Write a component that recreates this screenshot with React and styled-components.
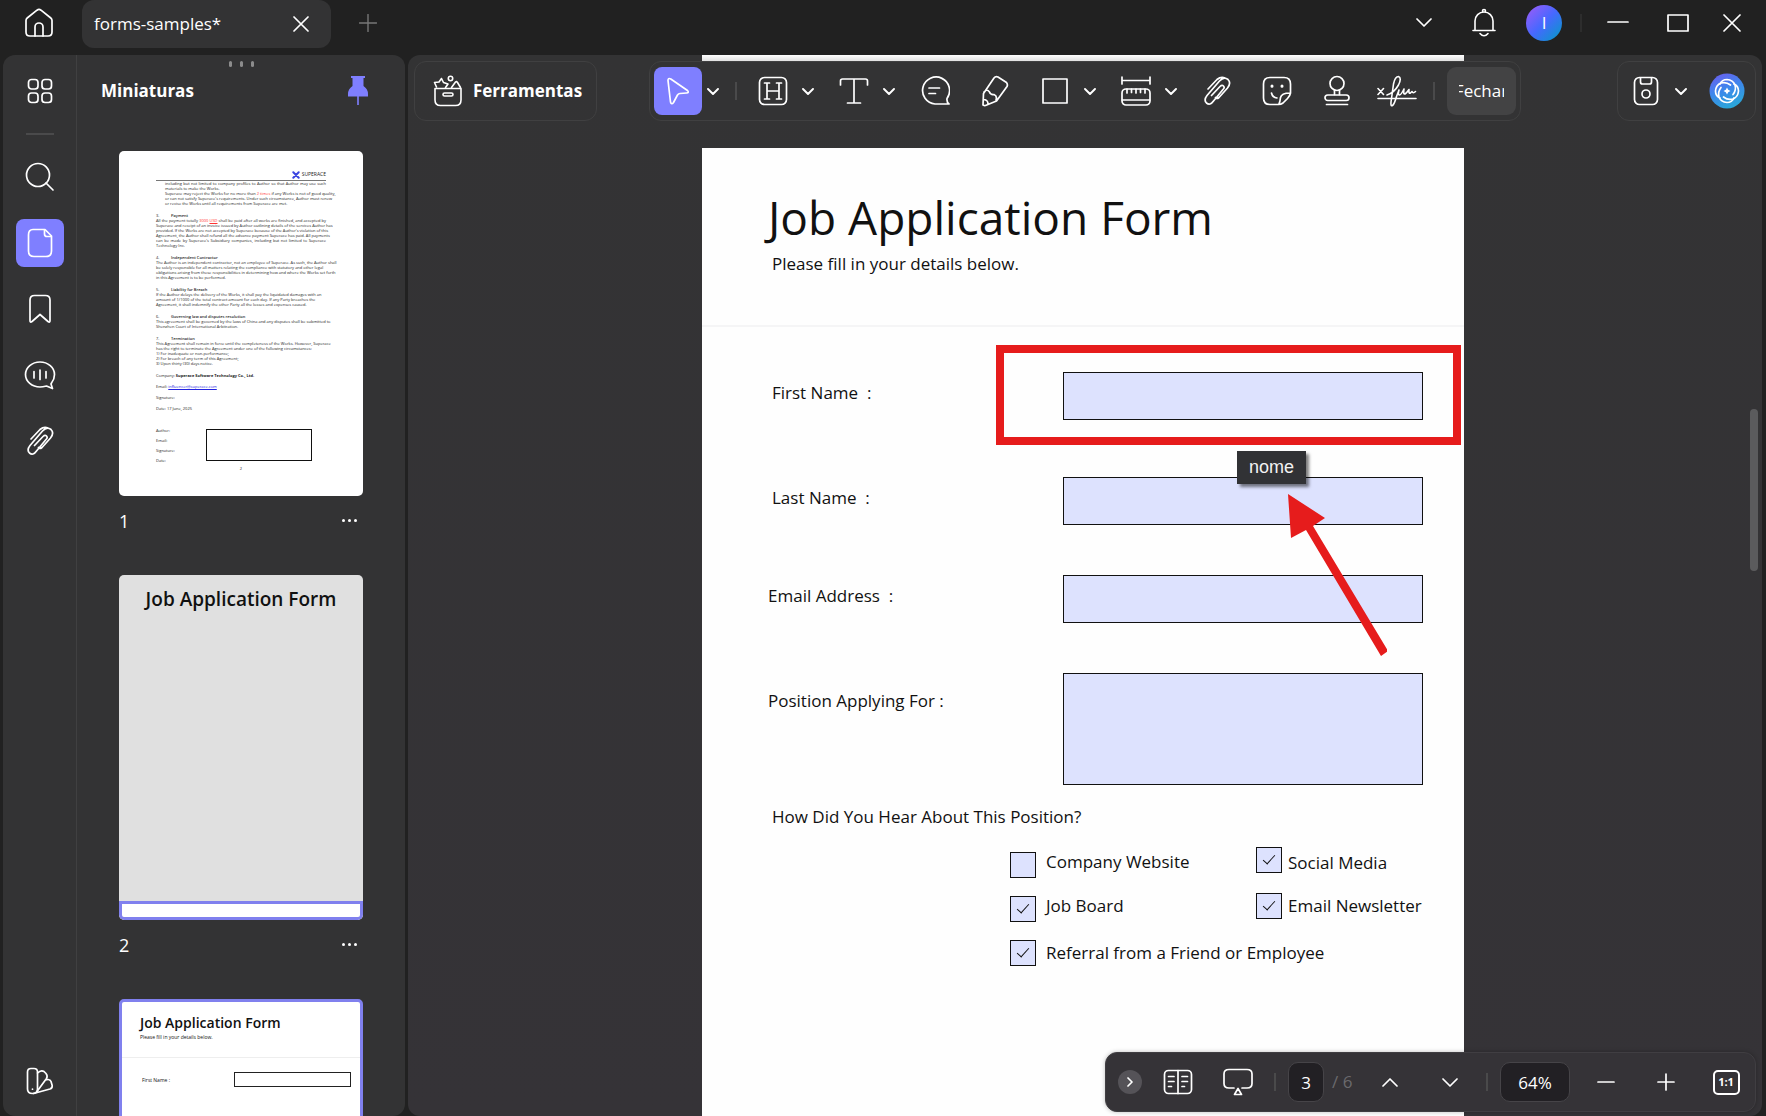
import React from "react";
import styled, { createGlobalStyle, css } from "styled-components";

const color = {
  chrome: "#212121",
  panel: "#333334",
  line: "#404041",
  accent: "#7f7fff",
  field: "#dde2fe",
  mark: "#e61c1c",
};

const GlobalStyle = createGlobalStyle`
  *, *::before, *::after { box-sizing: border-box; }
  html, body, #root { height: 100%; }
  body {
    margin: 0;
    background: ${color.chrome};
    color: #fff;
    font: 17px/24px "Open Sans", "Noto Sans", sans-serif;
    overflow: hidden;
  }
  button, input, textarea { font: inherit; color: inherit; }
  svg { display: block; flex: none; }
`;

/* ---------- icons ---------- */

const Glyph = ({ w = 30, h = 30, sw = 1.7, children }) => (
  <svg
    width={w}
    height={h}
    viewBox={`0 0 ${w} ${h}`}
    fill="none"
    stroke="#fff"
    strokeWidth={sw}
    strokeLinecap="round"
    strokeLinejoin="round"
    aria-hidden="true"
  >
    {children}
  </svg>
);

const HomeIcon = () => (
  <Glyph>
    <path d="M2 12.5 Q2 11 3.2 10 L13 2.2 Q15 .7 17 2.2 L26.800 10 Q28 11 28 12.500 V24 Q28 28 24 28 H6 Q2 28 2 24 Z" />
    <path d="M11 28 V19 A4 4 0 0 1 19 19 V28" />
  </Glyph>
);
const CloseIcon = ({ size = 16 }) => (
  <Glyph w={size} h={size}>
    <path d={`M1 1 L${size - 1} ${size - 1} M${size - 1} 1 L1 ${size - 1}`} />
  </Glyph>
);
const AddTabIcon = () => (
  <Glyph w={18} h={18} sw={1.4}>
    <path stroke="#777" d="M9 0.500 V17.500 M0.500 9 H17.500" />
  </Glyph>
);
const BellIcon = () => (
  <Glyph w={24} h={30} sw={1.6}>
    <path d="M3 22 V13 A9 9 0 0 1 21 13 V22 M1 22.500 H23 M8 25.500 Q12 30 16 25.500 M10.500 4 V3 A1.500 1.500 0 0 1 13.500 3 V4" />
  </Glyph>
);
const MinimizeIcon = () => (
  <Glyph w={22} h={18}>
    <path d="M1 8 H21" />
  </Glyph>
);
const MaximizeIcon = () => (
  <Glyph w={22} h={18}>
    <rect x="1" y="1" width="20" height="16" />
  </Glyph>
);
const ChevronIcon = ({ w = 16, h = 9, up, sw = 1.7 }) => (
  <Glyph w={w} h={h} sw={sw}>
    <path d={up ? `M1 ${h - 1} L${w / 2} 1 L${w - 1} ${h - 1}` : `M1 1 L${w / 2} ${h - 1} L${w - 1} 1`} />
  </Glyph>
);
const GridIcon = () => (
  <Glyph w={26} h={26}>
    <rect x="1.500" y="1.500" width="9.500" height="9.500" rx="3" />
    <rect x="15" y="1.500" width="9.500" height="9.500" rx="3" />
    <rect x="1.500" y="15" width="9.500" height="9.500" rx="3" />
    <rect x="15" y="15" width="9.500" height="9.500" rx="3" />
  </Glyph>
);
const SearchIcon = () => (
  <Glyph>
    <circle cx="13" cy="13" r="11.500" />
    <path d="M21 21 L28 28" />
  </Glyph>
);
const FileIcon = () => (
  <Glyph w={26} h={30}>
    <path d="M6 1.500 H18 L24.500 8 V23 Q24.500 28.500 19 28.500 H7 Q1.500 28.500 1.500 23 V7 Q1.500 1.500 6 1.500 Z" />
    <path d="M17.500 2 V6 Q17.500 8.500 20 8.500 H24" />
  </Glyph>
);
const BookmarkIcon = () => (
  <Glyph w={24} h={30}>
    <path d="M2 6 Q2 1.500 6.500 1.500 H17.500 Q22 1.500 22 6 V26.500 Q22 29 20 27.500 L12 20.500 L4 27.500 Q2 29 2 26.500 Z" />
  </Glyph>
);
const VoiceIcon = () => (
  <Glyph w={32} h={30}>
    <path d="M27.500 23 C29.500 20.500 30.500 17.500 30.500 14.500 C30.500 7.500 24 2 16 2 C8 2 1.500 7.500 1.500 14.500 C1.500 21.500 8 27 16 27 C18.500 27 20.500 26.500 22.500 26 L28.500 28.500 L27 24 Z" />
    <path d="M10 11.500 V18 M16 10 V19.500 M22 11.500 V18" />
  </Glyph>
);
const ClipIcon = () => (
  <Glyph w={28} h={30}>
    <path d="M8.500 19.500 L17 10.500 Q19 8.500 20.500 10 Q22 11.500 20 13.500 L10.500 25 Q7 30 3.500 27 Q.5 24 4 19.500 L16.500 5 Q21 0 25 3.500 Q28.500 7 24.500 12 L16 21.500 Q13.500 23.500 12.500 21.500 M5 13 L14 3.500 Q18 0 22 2" />
  </Glyph>
);
const SwatchIcon = () => (
  <Glyph w={28} h={28}>
    <path d="M5 1.500 H8 Q11.500 1.500 11.500 5 V22 Q11.500 26.500 6.500 26.500 Q1.500 26.500 1.500 22 V5 Q1.500 1.500 5 1.500 Z" />
    <path d="M11.500 6 Q15 2.500 18 4.500 L20 6.500 Q22 9 20.500 11.500 L11 24.500 M19.500 13 Q24 11.500 25 14.500 L26.200 18.500 Q26.500 21 24 22 L7.500 26.500" />
    <path d="M6.500 22 V22.200" />
  </Glyph>
);
const PinIcon = () => (
  <svg width="20" height="30" viewBox="0 0 20 30" aria-hidden="true">
    <path fill={color.accent} d="M3 0 H17 V2 H15.500 V10 Q20 13 20 18 V20.500 H0 V18 Q0 13 4.500 10 V2 H3 Z" />
    <rect x="9.200" y="20" width="1.600" height="9" fill={color.accent} />
  </svg>
);
const ToolboxIcon = () => (
  <Glyph w={30} h={32} sw={1.600}>
    <path d="M2 13.500 H28 V25 Q28 30.500 22.500 30.500 H7.500 Q2 30.500 2 25 Z" />
    <rect x="10" y="18" width="10" height="3" rx="1.500" />
    <path d="M3.500 12 L1.500 7.500 L6 7 L8.500 3.500 L10.500 7.500 L15 9 L12.500 12.500 M18.500 12.500 L22.500 7 Q23.500 6 24.500 7.500 L27.500 12.500" />
    <circle cx="17.500" cy="3.500" r="2.200" />
  </Glyph>
);
const CursorIcon = () => (
  <Glyph w={24} h={30}>
    <path d="M2 4.500 Q2 1.500 4.800 3 L21.500 14.500 Q23.500 16.800 20.500 17 L14 17.500 Q12.500 17.600 11.500 19 L7.500 26.500 Q5.500 29.200 4.500 26 Z" />
  </Glyph>
);
const HighlightIcon = () => (
  <Glyph>
    <rect x="1.500" y="1.500" width="27" height="27" rx="5" />
    <path d="M9 7 V23 M21 7 V23 M6.500 7 H11.500 M18.500 7 H23.500 M6.500 23 H11.500 M18.500 23 H23.500 M9 15 H21" />
  </Glyph>
);
const TextIcon = () => (
  <Glyph w={30} h={28}>
    <path d="M1.500 8 V4 Q1.500 2 3.500 2 H26.500 Q28.500 2 28.500 4 V8 M15 2 V26 M8.500 26 H21.500" />
  </Glyph>
);
const CommentIcon = () => (
  <Glyph>
    <path d="M15 28 H29 Q26.500 26 27 22.500 A13.500 13.500 0 1 0 15 28 Z M9 12 H19.500 M9 17.500 H15.500" />
  </Glyph>
);
const PencilIcon = () => (
  <Glyph w={28} h={32}>
    <path d="M2 30 L2.500 18.500 L13 3 Q14.500 1 17 2 L25.500 7.500 Q27 9.500 26 11.500 L15.500 26 L4.500 30.500 Q2 31 2 29 Z M3 17 Q6 13.500 8.500 17 Q9.500 20 13 19.500 Q16.500 21 15 25 M3 24.500 Q7 25 7 29" />
  </Glyph>
);
const SquareIcon = () => (
  <Glyph w={26} h={26}>
    <rect x="1" y="1" width="24" height="24" />
  </Glyph>
);
const MeasureIcon = () => (
  <Glyph>
    <path d="M1 1 V8 M29 1 V8 M1 4.500 H29 M1.500 24 H28.500" />
    <rect x="1" y="13" width="28" height="16" rx="4" />
    <path d="M6 13 V17 M10.500 13 V16.500 M15 13 V17 M19.500 13 V16.500 M24 13 V17" />
  </Glyph>
);
const StickerIcon = () => (
  <Glyph>
    <path d="M8 1.500 H22 Q28.500 1.500 28.500 8 V17 Q28 20 25.500 22.500 L21 27 Q19 28.500 16.500 28.500 H8 Q1.500 28.500 1.500 22 V8 Q1.500 1.500 8 1.500 Z M28 17 Q19.500 17 18.500 21.500 Q18 26 17 28 M9.500 17 Q10.500 21.500 15 22" />
    <path strokeWidth="3" d="M10 10 V10.200 M20 10 V10.200" />
  </Glyph>
);
const StampIcon = () => (
  <Glyph w={26} h={32}>
    <ellipse cx="13" cy="8.500" rx="7" ry="7" />
    <path d="M10.500 15.500 V19.500 M15.500 15.500 V19.500 M2.500 29.500 H23.500" />
    <rect x="1" y="20" width="24" height="5.500" rx="2.700" />
  </Glyph>
);
const SignIcon = () => (
  <Glyph w={40} h={32} sw={1.600}>
    <path d="M1 13.500 L6.500 19.500 M6.500 13.500 L1 19.500 M1 23.500 H39" />
    <path d="M10 20 Q17 18 21.500 10 Q25 2.500 21.500 1.500 Q18 1.500 16.500 9 L14 27 Q13.500 31.500 15.500 30.500 Q17.500 29 19.500 21.500 L22 15 Q20.500 20 22.500 20 Q24 20 27 14 Q26 19.500 28 19 Q30 17.500 32 14.500 Q31.500 19 33.500 18 L35 16.500 Q36 19 38.500 16.500" />
  </Glyph>
);
const SaveIcon = () => (
  <Glyph w={26} h={30}>
    <rect x="1.500" y="1.500" width="23" height="27" rx="5" />
    <path d="M7.500 2 V6 Q7.500 8 9.500 8 H16.500 Q18.500 8 18.500 6 V2" />
    <circle cx="13" cy="18" r="4" />
  </Glyph>
);
const AssistantIcon = () => (
  <svg width="36" height="36" viewBox="0 0 36 36" aria-hidden="true">
    <defs>
      <linearGradient id="assistant" x1="0.200" y1="0" x2="0.600" y2="1">
        <stop offset="0" stopColor="#6a5ff0" />
        <stop offset="0.450" stopColor="#3f86ec" />
        <stop offset="1" stopColor="#29a8d8" />
      </linearGradient>
    </defs>
    <circle cx="18" cy="18" r="17.500" fill="url(#assistant)" />
    <g fill="none" stroke="#fff" strokeWidth="1.700" strokeLinecap="round">
      {[0, 90, 180, 270].map((a) => (
        <path key={a} transform={`rotate(${a} 18 18)`} d="M11 11 Q13 6.500 18 6.500 Q24 7 26 12 Q27.500 17 24 21.500" />
      ))}
    </g>
    <path fill="#fff" d="M18 14.500 L19.200 16.800 L21.500 18 L19.200 19.200 L18 21.500 L16.800 19.200 L14.500 18 L16.800 16.800 Z" />
  </svg>
);
const BookIcon = () => (
  <Glyph w={30} h={26}>
    <rect x="1.500" y="1.500" width="27" height="23" rx="4" />
    <path d="M15 1.500 V24.500 M5.500 7.500 H11 M5.500 12.500 H11 M5.500 17.500 H8.500 M19 7.500 H24.500 M19 12.500 H24.500 M19 17.500 H21.500" />
  </Glyph>
);
const PresentIcon = () => (
  <Glyph w={30} h={28}>
    <path d="M11 20 H6 Q1 20 1 15.500 V6 Q1 1.500 6 1.500 H24 Q29 1.500 29 6 V15.500 Q29 20 24 20 H19 M15 20.500 L11.500 26.500 H18.500 Z" />
  </Glyph>
);
const SignLineIcon = ({ plus }) => (
  <Glyph w={18} h={18}>
    <path d={plus ? "M9 1 V17 M1 9 H17" : "M1 9 H17"} />
  </Glyph>
);
const ArrowMark = styled.svg`
  position: absolute;
  left: 224px;
  top: 121px;
  z-index: 2;
  pointer-events: none;
`;
const LogoMark = () => (
  <svg width="8" height="8" viewBox="0 0 8 8" aria-hidden="true">
    <path stroke="#3b45e0" strokeWidth="2" strokeLinecap="round" d="M1.300 1.300 L6.700 6.700 M6.700 1.300 L1.300 6.700" />
  </svg>
);

/* ---------- window frame ---------- */

const Window = styled.div`
  display: flex;
  flex-direction: column;
  height: 100vh;
  min-width: 1200px;
`;
const TitleBar = styled.header`
  display: flex;
  align-items: center;
  flex: none;
  height: 55px;
  padding: 0 16px 10px 24px;
  gap: 28px;
`;
const IconButton = styled.button`
  display: flex;
  align-items: center;
  justify-content: center;
  flex: none;
  width: ${(p) => p.$w || 48}px;
  height: 48px;
  padding: 0;
  border: 0;
  border-radius: 8px;
  background: ${(p) => (p.$active ? color.accent : "transparent")};
  cursor: pointer;
`;
const Tab = styled.div`
  display: flex;
  align-items: center;
  justify-content: space-between;
  width: 249px;
  height: 48px;
  margin: 3px 0 0 0;
  padding: 0 14px 0 12px;
  border-radius: 12px;
  background: ${color.panel};
`;
const WindowControls = styled.div`
  display: flex;
  align-items: center;
  margin-left: auto;
  gap: 12px;
`;
const Avatar = styled.button`
  width: 36px;
  height: 36px;
  margin: 0 6px;
  padding: 0;
  border: 0;
  border-radius: 50%;
  background: linear-gradient(135deg, #9a5cf8 5%, #4668ff 50%, #0798c8 95%);
  line-height: 36px;
`;
const Divider = styled.span`
  flex: none;
  width: ${(p) => (p.$across ? "28px" : "2px")};
  height: ${(p) => (p.$across ? "2px" : "18px")};
  background: ${(p) => (p.$faint ? "#2d2d2d" : "#4a4a4b")};
`;
const Workspace = styled.div`
  display: flex;
  flex: 1;
  min-height: 0;
  gap: 3px;
  padding: 0 4px 0 3px;
`;

/* ---------- side panel ---------- */

const SidePanel = styled.aside`
  display: flex;
  flex: none;
  width: 402px;
  border-radius: 12px;
  background: ${color.panel};
  overflow: hidden;
`;
const Rail = styled.nav`
  display: flex;
  flex-direction: column;
  align-items: center;
  gap: 18px;
  width: 74px;
  padding: 12px 0 11px;
  border-right: 1px solid ${color.line};
`;
const RailSpacer = styled.span`
  flex: 1;
`;
const Thumbnails = styled.section`
  display: flex;
  flex-direction: column;
  flex: 1;
  min-width: 0;
  padding: 6px 42px 0;
`;
const Grip = styled.div`
  display: flex;
  justify-content: center;
  gap: 8px;
  height: 6px;
  i {
    width: 3px;
    border-radius: 2px;
    background: #8c8c8c;
  }
`;
const PanelHeader = styled.div`
  display: flex;
  align-items: center;
  justify-content: space-between;
  margin: 0 -5px 0 -18px;
  height: 48px;
`;
const PanelTitle = styled.h2`
  margin: 0;
  font-size: 17px;
  font-weight: 700;
`;
const ThumbList = styled.ol`
  flex: 1;
  min-height: 0;
  margin: 36px 0 0;
  padding: 0;
  list-style: none;
  overflow: hidden;
`;
const ThumbItem = styled.li`
  display: flex;
  flex-direction: column;
`;
const Thumb = styled.div`
  display: flex;
  flex-direction: column;
  height: 345px;
  border-radius: 5px;
  background: ${(p) => (p.$dim ? "#e0e0e0" : "#fff")};
  border: ${(p) => (p.$selected ? `3px solid #8080ee` : "0")};
  color: #111;
  overflow: hidden;
`;
const ThumbFooter = styled.div`
  display: flex;
  align-items: center;
  justify-content: space-between;
  height: 49px;
  margin-bottom: 30px;
  font-size: 18px;
`;
const MoreButton = styled.button`
  display: flex;
  gap: 3px;
  padding: 6px;
  border: 0;
  background: none;
  i {
    width: 3px;
    height: 3px;
    border-radius: 50%;
    background: #fff;
  }
`;
const ContractPage = styled.div`
  display: flex;
  flex-direction: column;
  padding: 18px 37px 0;
  font-size: 4px;
  line-height: 5px;
  color: #222;
`;
const Letterhead = styled.div`
  display: flex;
  align-items: center;
  justify-content: flex-end;
  gap: 2px;
  height: 12px;
  border-bottom: 1px solid #777;
  font-size: 5px;
`;
const Clause = styled.div`
  margin-bottom: 7px;
  padding-left: ${(p) => (p.$indent ? 9 : 0)}px;
`;
const Line = styled.div`
  white-space: nowrap;
  ${(p) =>
    p.$full &&
    css`
      text-align: justify;
      text-align-last: justify;
    `}
  em {
    font-style: normal;
    color: #f33;
  }
`;
const ClauseTitle = styled.div`
  display: flex;
  font-weight: 600;
  span {
    width: 15px;
    font-weight: 400;
  }
`;
const Details = styled.div`
  display: flex;
  flex-direction: column;
  gap: ${(p) => p.$gap}px;
  a {
    color: #2323e0;
  }
`;
const SignBlock = styled.div`
  display: flex;
  gap: 31px;
  margin-top: 17px;
`;
const SignBox = styled.div`
  width: 106px;
  height: 32px;
  margin-top: 1px;
  border: 1px solid #111;
`;
const Folio = styled.div`
  text-align: center;
  margin-top: 3px;
`;
const CoverTitle = styled.div`
  flex: 1;
  padding-top: 10px;
  font-size: 19px;
  line-height: 28px;
  font-weight: 600;
  text-align: center;
  white-space: nowrap;
`;
const Viewport = styled.div`
  height: 19px;
  border: 3px solid #8080ee;
  border-radius: 0 0 5px 5px;
  background: #fff;
`;
const MiniHeader = styled.div`
  padding: 12px 18px 15px;
  border-bottom: 1px solid #eee;
  font-size: 5px;
  line-height: 10px;
  b {
    display: block;
    font-size: 14px;
    line-height: 18px;
    font-weight: 600;
  }
`;
const MiniRow = styled.div`
  display: flex;
  align-items: center;
  justify-content: space-between;
  height: 15px;
  margin: 14px 9px 18px 20px;
  font-size: 5px;
  i {
    width: 117px;
    height: 15px;
    border: 1px solid #222;
  }
`;

/* ---------- document area ---------- */

const Main = styled.main`
  position: relative;
  display: flex;
  flex-direction: column;
  flex: 1;
  min-width: 0;
  border-radius: 12px;
  background: linear-gradient(#333334, #353337);
  overflow: hidden;
`;
const PreviousPage = styled.div`
  flex: none;
  width: 762px;
  height: 6px;
  margin: 0 auto;
  background: linear-gradient(#fff, #e0e0e0);
`;
const Column = styled.div`
  display: flex;
  flex-direction: column;
  flex: ${(p) => (p.$grow ? "1" : "none")};
  min-height: 0;
  padding-right: 4px;
`;
const Toolbars = styled.div`
  display: grid;
  grid-template-columns: 1fr auto 1fr;
  flex: none;
  margin: 0 6px 27px;
`;
const Toolbar = styled.div`
  display: flex;
  align-items: center;
  gap: 12px;
  height: 60px;
  padding: 0 4px;
  border: 1px solid ${color.line};
  border-radius: 12px;
  background: ${color.panel};
  justify-self: ${(p) => p.$side || "center"};
`;
const ToolsButton = styled.button`
  display: flex;
  align-items: center;
  gap: 10px;
  height: 60px;
  padding: 0 14px 0 18px;
  border: 1px solid ${color.line};
  border-radius: 12px;
  background: transparent;
  font-weight: 700;
  justify-self: start;
`;
const Split = styled.div`
  display: flex;
`;
const FinishButton = styled.button`
  display: flex;
  justify-content: center;
  width: 69px;
  height: 48px;
  padding: 11px 12px;
  border: 0;
  border-radius: 9px;
  background: #434344;
  line-height: 26px;
  span {
    display: flex;
    justify-content: center;
    width: 45px;
    overflow: hidden;
  }
`;
const Page = styled.form`
  flex: 1;
  width: 762px;
  margin: 0 auto;
  background: #fefefe;
  color: #111;
`;
const PageHeader = styled.div`
  height: 179px;
  padding: 39px 66px 0;
  border-bottom: 2px solid #f5f5f6;
  margin-bottom: 45px;
`;
const Title = styled.h1`
  margin: 0;
  font-size: 46px;
  line-height: 60px;
  font-weight: 500;
  white-space: nowrap;
`;
const Subtitle = styled.p`
  margin: 5px 0 0 4px;
`;
const Row = styled.div`
  display: flex;
  align-items: flex-start;
  margin-bottom: ${(p) => p.$gap || 50}px;
`;
const Label = styled.label`
  width: 361px;
  padding-left: ${(p) => (p.$inset ? 70 : 66)}px;
  line-height: ${(p) => (p.$tall ? 56 : 42)}px;
`;
const Control = styled.div`
  position: relative;
  width: 360px;
`;
const fieldStyle = css`
  display: block;
  width: 100%;
  padding: 0 10px;
  border: 1px solid #111;
  border-radius: 0;
  background: ${color.field};
  outline: none;
  resize: none;
`;
const Field = styled.input`
  ${fieldStyle}
  height: 48px;
`;
const Area = styled.textarea`
  ${fieldStyle}
  height: 112px;
`;
const MarkFrame = styled.span`
  position: absolute;
  inset: -27px -38px -25px -67px;
  border: 8px solid ${color.mark};
  pointer-events: none;
`;
const Tooltip = styled.span`
  position: absolute;
  left: 174px;
  top: 79px;
  z-index: 1;
  padding: 4px 12px;
  background: #313235;
  box-shadow: 3px 3px 3px rgba(0, 0, 0, 0.5);
  color: #f2f2f2;
  font: 18px/25px "Liberation Sans", Arial, sans-serif;
`;
const Fieldset = styled.fieldset`
  margin: -30px 0 0;
  padding: 0;
  border: 0;
`;
const Legend = styled.legend`
  padding: 0 0 0 70px;
`;
const Options = styled.div`
  display: grid;
  grid-template-columns: 246px 1fr;
  margin: 18px 0 0 308px;
`;
const OptionColumn = styled.div`
  display: flex;
  flex-direction: column;
  gap: ${(p) => (p.$first ? 18 : 20)}px;
  padding-top: ${(p) => (p.$first ? 5 : 0)}px;
`;
const Option = styled.label`
  display: flex;
  align-items: ${(p) => p.$align || "center"};
  gap: ${(p) => (p.$wide ? 10 : 6)}px;
  line-height: 20px;
  white-space: nowrap;
`;
const Tick = styled.input`
  appearance: none;
  display: flex;
  justify-content: center;
  flex: none;
  width: 26px;
  height: 26px;
  margin: 0;
  border: 1px solid #111;
  background: ${color.field};
  &:checked::after {
    content: "";
    width: 6px;
    height: 12px;
    margin-top: 4px;
    border: solid #111;
    border-width: 0 1px 1px 0;
    transform: rotate(42deg);
  }
`;
const ScrollThumb = styled.div`
  position: absolute;
  top: 354px;
  right: 4px;
  width: 8px;
  height: 162px;
  border-radius: 4px;
  background: #5b5b5d;
`;
const ViewBar = styled.div`
  position: absolute;
  right: 6px;
  bottom: 4px;
  display: flex;
  align-items: center;
  gap: 12px;
  height: 60px;
  padding: 0 5px 0 12px;
  border: 1px solid #403e42;
  border-radius: 12px;
  background: #353337;
  box-shadow: 0 0 4px rgba(0, 0, 0, 0.25);
  z-index: 3;
`;
const Collapse = styled.button`
  display: flex;
  align-items: center;
  justify-content: center;
  width: 24px;
  height: 24px;
  padding: 0;
  border: 0;
  border-radius: 50%;
  background: #555358;
  svg {
    transform: rotate(-90deg);
  }
`;
const Pager = styled.label`
  display: flex;
  align-items: center;
  gap: 8px;
  width: 66px;
  color: #6b6a6d;
`;
const Box = styled.input`
  width: ${(p) => p.$w}px;
  height: 40px;
  padding: 0;
  border: 1px solid #464448;
  border-radius: 10px;
  background: #222024;
  color: #fff;
  text-align: center;
`;
const ActualSize = styled.span`
  width: 27px;
  height: 25px;
  border: 2px solid #fff;
  border-radius: 5px;
  font-size: 11px;
  line-height: 20px;
  font-weight: 700;
`;

/* ---------- composition ---------- */

const Tool = ({ label, icon, active, caret }) => (
  <Split>
    <IconButton aria-label={label} $active={active} type="button">
      {icon}
    </IconButton>
    {caret && (
      <IconButton aria-label={`${label}: opções`} $w={21} type="button">
        <ChevronIcon w={12} h={7} sw={1.9} />
      </IconButton>
    )}
  </Split>
);

const tools = [
  { label: "Destacar", icon: <HighlightIcon />, caret: true },
  { label: "Texto", icon: <TextIcon />, caret: true },
  { label: "Nota", icon: <CommentIcon /> },
  { label: "Lápis", icon: <PencilIcon /> },
  { label: "Forma", icon: <SquareIcon />, caret: true },
  { label: "Medir", icon: <MeasureIcon />, caret: true },
  { label: "Anexo", icon: <ClipIcon /> },
  { label: "Adesivo", icon: <StickerIcon /> },
  { label: "Carimbo", icon: <StampIcon /> },
  { label: "Assinatura", icon: <SignIcon /> },
];

const railItems = [
  { label: "Pesquisar", icon: <SearchIcon /> },
  { label: "Miniaturas", icon: <FileIcon />, active: true },
  { label: "Marcadores", icon: <BookmarkIcon /> },
  { label: "Comentários", icon: <VoiceIcon /> },
  { label: "Anexos", icon: <ClipIcon /> },
];

const clauses = [
  {
    no: "3.",
    title: "Payment",
    lines: [
      [<>All the payment totally <em>3000 <u>USD</u></em> shall be paid after all works are finished, and accepted by</>, 1],
      ["Superace and receipt of an invoice issued by Author outlining details of the services Author has", 1],
      ["provided. If the Works are not accepted by Superace because of the Author's violation of this", 1],
      ["Agreement, the Author shall refund all the advance payment Superace has paid. All payments", 1],
      ["can be made by Superace's Subsidiary companies, including but not limited to Superace", 1],
      ["Technology Inc."],
    ],
  },
  {
    no: "4.",
    title: "Independent Contractor",
    lines: [
      ["The Author is an independent contractor, not an employee of Superace. As such, the Author shall", 1],
      ["be solely responsible for all matters relating the compliance with statutory and other legal"],
      ["obligations arising from these responsibilities in determining how and where the Works set forth", 1],
      ["in this Agreement is to be performed."],
    ],
  },
  {
    no: "5.",
    title: "Liability for Breach",
    lines: [
      ["If the Author delays the delivery of the Works, it shall pay the liquidated damages with an"],
      ["amount of 1/1000 of the total contract amount for each day. If any Party breaches the"],
      ["Agreement, it shall indemnify the other Party all the losses and expenses caused."],
    ],
  },
  {
    no: "6.",
    title: "Governing law and disputes resolution",
    lines: [
      ["This agreement shall be governed by the laws of China and any disputes shall be submitted to"],
      ["Shenzhen Court of International Arbitration."],
    ],
  },
  {
    no: "7.",
    title: "Termination",
    lines: [
      ["This Agreement shall remain in force until the completeness of the Works. However, Superace", 1],
      ["has the right to terminate the Agreement under one of the following circumstances:"],
      ["1) For inadequate or non-performance;"],
      ["2) For breach of any term of this Agreement;"],
      ["3) Upon thirty (30) days notice."],
    ],
  },
];

const Footer = ({ n }) => (
  <ThumbFooter>
    <span>{n}</span>
    <MoreButton aria-label={`Mais opções da página ${n}`}>
      <i />
      <i />
      <i />
    </MoreButton>
  </ThumbFooter>
);

const ContractThumb = () => (
  <ContractPage>
    <Letterhead>
      <LogoMark />
      SUPERACE
    </Letterhead>
    <Clause $indent>
      <Line $full>including but not limited to company profiles to Author so that Author may use such</Line>
      <Line>materials to make the Works.</Line>
      <Line $full>Superace may reject the Works for no more than <em>2 times</em> if any Works is not of good quality,</Line>
      <Line $full>or can not satisfy Superace's requirements. Under such circumstance, Author must renew</Line>
      <Line>or revise the Works until all requirements from Superace are met.</Line>
    </Clause>
    {clauses.map((c) => (
      <Clause key={c.no}>
        <ClauseTitle>
          <span>{c.no}</span>
          {c.title}
        </ClauseTitle>
        {c.lines.map(([text, full], i) => (
          <Line key={i} $full={full}>
            {text}
          </Line>
        ))}
      </Clause>
    ))}
    <Details $gap={6}>
      <div>Company: <b>Superace Software Technology Co., Ltd.</b></div>
      <div>Email: <a href="mailto:influencer@superace.com">influencer@superace.com</a></div>
      <div>Signature:</div>
      <div>Date: 17 June, 2025</div>
    </Details>
    <SignBlock>
      <Details $gap={5}>
        <div>Author:</div>
        <div>Email:</div>
        <div>Signature:</div>
        <div>Date:</div>
      </Details>
      <SignBox />
    </SignBlock>
    <Folio>2</Folio>
  </ContractPage>
);

export default function App() {
  return (
    <Window>
      <GlobalStyle />
      <TitleBar>
        <IconButton $w={30} aria-label="Início">
          <HomeIcon />
        </IconButton>
        <Tab>
          <span>forms-samples*</span>
          <IconButton $w={32} aria-label="Fechar aba">
            <CloseIcon />
          </IconButton>
        </Tab>
        <IconButton $w={18} aria-label="Nova aba">
          <AddTabIcon />
        </IconButton>
        <WindowControls>
          <IconButton aria-label="Abas abertas">
            <ChevronIcon />
          </IconButton>
          <IconButton aria-label="Notificações">
            <BellIcon />
          </IconButton>
          <Avatar>I</Avatar>
          <Divider $faint />
          <IconButton aria-label="Minimizar">
            <MinimizeIcon />
          </IconButton>
          <IconButton aria-label="Maximizar">
            <MaximizeIcon />
          </IconButton>
          <IconButton $w={36} aria-label="Fechar janela">
            <CloseIcon size={18} />
          </IconButton>
        </WindowControls>
      </TitleBar>

      <Workspace>
        <SidePanel>
          <Rail>
            <IconButton aria-label="Painéis">
              <GridIcon />
            </IconButton>
            <Divider $across />
            {railItems.map((r) => (
              <IconButton key={r.label} aria-label={r.label} $active={r.active}>
                {r.icon}
              </IconButton>
            ))}
            <RailSpacer />
            <IconButton aria-label="Aparência">
              <SwatchIcon />
            </IconButton>
          </Rail>
          <Thumbnails>
            <Grip>
              <i />
              <i />
              <i />
            </Grip>
            <PanelHeader>
              <PanelTitle>Miniaturas</PanelTitle>
              <IconButton $w={20} aria-label="Fixar painel">
                <PinIcon />
              </IconButton>
            </PanelHeader>
            <ThumbList>
              <ThumbItem>
                <Thumb>
                  <ContractThumb />
                </Thumb>
                <Footer n={1} />
              </ThumbItem>
              <ThumbItem>
                <Thumb $dim>
                  <CoverTitle>Job Application Form</CoverTitle>
                  <Viewport />
                </Thumb>
                <Footer n={2} />
              </ThumbItem>
              <ThumbItem>
                <Thumb $selected>
                  <MiniHeader>
                    <b>Job Application Form</b>
                    Please fill in your details below.
                  </MiniHeader>
                  <MiniRow>
                    First Name :<i />
                  </MiniRow>
                  <MiniRow>
                    Last Name :<i />
                  </MiniRow>
                </Thumb>
              </ThumbItem>
            </ThumbList>
          </Thumbnails>
        </SidePanel>

        <Main>
          <Column>
            <PreviousPage />
          </Column>
          <Toolbars>
            <ToolsButton>
              <ToolboxIcon />
              Ferramentas
            </ToolsButton>
            <Toolbar>
              <Tool label="Selecionar" icon={<CursorIcon />} active caret />
              <Divider />
              {tools.map((t) => (
                <Tool key={t.label} {...t} />
              ))}
              <Divider />
              <FinishButton>
                <span>Fechar</span>
              </FinishButton>
            </Toolbar>
            <Toolbar $side="end">
              <Tool label="Salvar" icon={<SaveIcon />} caret />
              <IconButton aria-label="Assistente">
                <AssistantIcon />
              </IconButton>
            </Toolbar>
          </Toolbars>

          <Column $grow>
            <Page>
              <PageHeader>
                <Title>Job Application Form</Title>
                <Subtitle>Please fill in your details below.</Subtitle>
              </PageHeader>
              <Row $gap={57}>
                <Label htmlFor="first" $inset>First Name&nbsp; :</Label>
                <Control>
                  <Field id="first" />
                  <MarkFrame />
                  <Tooltip role="tooltip">nome</Tooltip>
                  <ArrowMark width="100" height="166" viewBox="0 0 100 166" aria-hidden="true">
                    <path fill={color.mark} d="M1 1 L38 25 L26 33 L101 158 L94 163 L19 37 L4 45 Z" />
                  </ArrowMark>
                </Control>
              </Row>
              <Row>
                <Label htmlFor="last" $inset>Last Name&nbsp; :</Label>
                <Control>
                  <Field id="last" />
                </Control>
              </Row>
              <Row>
                <Label htmlFor="email">Email Address&nbsp; :</Label>
                <Control>
                  <Field id="email" />
                </Control>
              </Row>
              <Row>
                <Label htmlFor="position" $tall>Position Applying For :</Label>
                <Control>
                  <Area id="position" />
                </Control>
              </Row>
              <Fieldset>
                <Legend>How Did You Hear About This Position?</Legend>
                <Options>
                  <OptionColumn $first>
                    <Option $wide $align="flex-start">
                      <Tick type="checkbox" />
                      Company Website
                    </Option>
                    <Option $wide $align="flex-start">
                      <Tick type="checkbox" defaultChecked />
                      Job Board
                    </Option>
                    <Option $wide>
                      <Tick type="checkbox" defaultChecked />
                      Referral from a Friend or Employee
                    </Option>
                  </OptionColumn>
                  <OptionColumn>
                    <Option $align="flex-end">
                      <Tick type="checkbox" defaultChecked />
                      Social Media
                    </Option>
                    <Option>
                      <Tick type="checkbox" defaultChecked />
                      Email Newsletter
                    </Option>
                  </OptionColumn>
                </Options>
              </Fieldset>
            </Page>
          </Column>

          <ScrollThumb />
          <ViewBar>
            <Collapse aria-label="Recolher barra">
              <ChevronIcon w={10} h={6} />
            </Collapse>
            <IconButton aria-label="Modo de leitura">
              <BookIcon />
            </IconButton>
            <IconButton aria-label="Apresentação">
              <PresentIcon />
            </IconButton>
            <Divider />
            <Pager>
              <Box $w={36} defaultValue="3" aria-label="Página atual" />/ 6
            </Pager>
            <IconButton aria-label="Página anterior">
              <ChevronIcon up />
            </IconButton>
            <IconButton aria-label="Próxima página">
              <ChevronIcon />
            </IconButton>
            <Divider />
            <Box $w={70} defaultValue="64%" aria-label="Zoom" />
            <IconButton aria-label="Diminuir zoom">
              <SignLineIcon />
            </IconButton>
            <IconButton aria-label="Aumentar zoom">
              <SignLineIcon plus />
            </IconButton>
            <IconButton aria-label="Tamanho real">
              <ActualSize>1:1</ActualSize>
            </IconButton>
          </ViewBar>
        </Main>
      </Workspace>
    </Window>
  );
}
